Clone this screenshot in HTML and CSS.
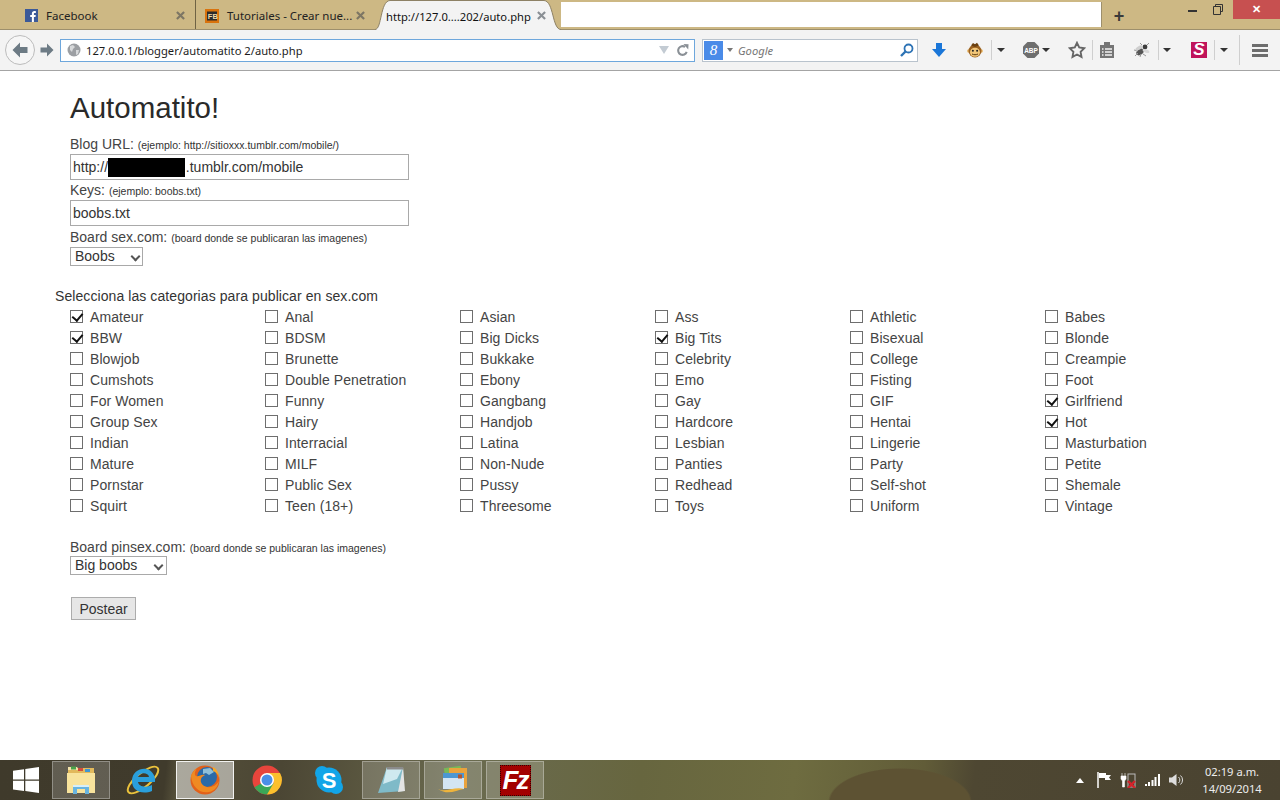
FILE: index.html
```
<!DOCTYPE html>
<html lang="es">
<head>
<meta charset="utf-8">
<title>Automatito</title>
<link rel="stylesheet" href="styles.css">
</head>
<body>
<div class="window">
  <header class="tabstrip">
    <div class="tab tab-fb">
      <svg class="favicon" viewBox="0 0 14 14"><rect width="14" height="14" fill="#3b5998"/><path d="M9.600 14V8.600h1.700l.3-2.100h-2V5.200c0-.6.2-1 1-1h1.100V2.300c-.2 0-.8-.1-1.600-.1-1.600 0-2.700 1-2.700 2.800v1.500H5.600v2.100h1.800V14z" fill="#fff"/></svg>
      <span class="tab-title">Facebook</span>
      <svg class="tab-close" viewBox="0 0 10 10"><path d="M1 1l8 8M9 1l-8 8"/></svg>
    </div>
    <div class="tab tab-tut">
      <svg class="favicon" viewBox="0 0 14 14"><rect width="14" height="14" fill="#d9730d"/><rect x="2" y="2.500" width="10" height="9" fill="#2b2b2b"/><text x="2.800" y="10" font-size="7.500" font-weight="700" font-family="Liberation Sans" fill="#f0d9a8">FB</text></svg>
      <span class="tab-title">Tutoriales - Crear nue...</span>
      <svg class="tab-close" viewBox="0 0 10 10"><path d="M1 1l8 8M9 1l-8 8"/></svg>
    </div>
    <div class="tab tab-active">
      <svg class="tab-shape" viewBox="0 0 186 30" width="186" height="30"><path d="M0 29.500C7 29.500 5 1 15 .5H169C179 1 177 29.500 186 29.500V31H0z" fill="#f3f3f3" stroke="#8d8165"/></svg>
      <span class="tab-title">http://127.0....202/auto.php</span>
      <svg class="tab-close" viewBox="0 0 10 10"><path d="M1 1l8 8M9 1l-8 8"/></svg>
    </div>
    <div class="tab-blank"></div>
    <div class="tab-new">+</div>
    <div class="win-controls">
      <span class="win-min"></span>
      <svg class="win-restore" viewBox="0 0 10 11"><path d="M2.500 2.500V.5h7v7h-2M.5 2.500h7v8h-7z" fill="none" stroke="#333"/></svg>
      <span class="win-close">✕</span>
    </div>
  </header>

  <nav class="toolbar">
    <div class="nav-back"><svg viewBox="0 0 18 18" width="18" height="18"><path d="M9 1.500 1.500 9 9 16.500V12h7.500V6H9z" fill="#6d7b85"/></svg></div>
    <div class="nav-fwd"><svg viewBox="0 0 14 14" width="14" height="14"><path d="M7 .5 13.500 7 7 13.500V9.500H.5v-5H7z" fill="#6d7b85"/></svg></div>
    <div class="urlbar">
      <svg class="globe" viewBox="0 0 14 14" width="14" height="14"><circle cx="7" cy="7" r="6.500" fill="#9c9fa3"/><path d="M3 3l3-1 2 2-2 2-1 3-2-2zM9 7l3 0-1 4-2 1z" fill="#d7d9db"/></svg>
      <span class="url-text">127.0.0.1/blogger/automatito 2/auto.php</span>
      <svg class="url-drop" viewBox="0 0 10 8" width="10" height="8"><path d="M0 0h10L5 8z" fill="#c3cbd3"/></svg>
      <svg class="url-reload" viewBox="0 0 14 14" width="13" height="13"><path d="M11.500 8.500A4.700 4.700 0 1 1 9.800 3.200" fill="none" stroke="#8a9096" stroke-width="2.200"/><path d="M8 0l5.500.3-.3 5.500z" fill="#8a9096"/></svg>
    </div>
    <div class="searchbar">
      <span class="g-badge">8</span>
      <svg class="search-drop" viewBox="0 0 6 4" width="6" height="4"><path d="M0 0h6L3 4z" fill="#777"/></svg>
      <span class="search-text">Google</span>
      <svg class="search-mag" viewBox="0 0 14 14" width="14" height="14"><circle cx="8.500" cy="5.500" r="4" fill="none" stroke="#2d73b5" stroke-width="1.800"/><path d="M5.500 8.500 1 13" stroke="#2d73b5" stroke-width="2.400"/></svg>
    </div>
    <svg class="ic ic-download" viewBox="0 0 16 16" width="16" height="16"><path d="M5 1h6v6h4l-7 8-7-8h4z" fill="#1a76d8"/></svg>
    <svg class="ic ic-monkey" viewBox="0 0 16 16" width="16" height="16"><circle cx="1.800" cy="9" r="1.700" fill="#e9b765"/><circle cx="14.200" cy="9" r="1.700" fill="#e9b765"/><circle cx="8" cy="9" r="6.500" fill="#9a6120"/><path d="M4 3.500 6 1l2 1.300L10 .8l2 2.700-4 1.500z" fill="#6b4010"/><ellipse cx="8" cy="10.300" rx="5" ry="4.500" fill="#f2c678"/><circle cx="5.900" cy="8.800" r="1" fill="#222"/><circle cx="10.100" cy="8.800" r="1" fill="#222"/><path d="M5 12c2 1 4 1 6 0" fill="none" stroke="#5a3a10"/></svg>
    <i class="sep sep-a"></i><i class="caret caret-a"></i>
    <svg class="ic ic-abp" viewBox="0 0 18 18" width="18" height="18"><path d="M5.500 1h7L17 5.500v7L12.500 17h-7L1 12.500v-7z" fill="#6e6e6e"/><text x="9" y="11.800" text-anchor="middle" font-size="6.500" font-weight="700" font-family="Liberation Sans" fill="#fff">ABP</text></svg>
    <i class="caret caret-b"></i>
    <svg class="ic ic-star" viewBox="0 0 18 18" width="18" height="18"><path d="M9 1.800l2.200 4.700 5.100.7-3.700 3.600.9 5.100L9 13.500l-4.500 2.400.9-5.100L1.700 7.200l5.100-.7z" fill="none" stroke="#666" stroke-width="1.900"/></svg>
    <i class="sep sep-b"></i>
    <svg class="ic ic-clip" viewBox="0 0 14 16" width="14" height="16"><path d="M0 3h14v13H0z" fill="#757575"/><rect x="4" y="0" width="6" height="4" fill="#757575"/><path d="M2 7h1.500M5 7h7M2 10h1.500M5 10h7M2 13h1.500M5 13h7" stroke="#f3f3f3" stroke-width="1.300"/></svg>
    <svg class="ic ic-bug" viewBox="0 0 18 16" width="18" height="16"><ellipse cx="7" cy="10" rx="4" ry="2.800" fill="#555" transform="rotate(-35 7 10)"/><circle cx="12" cy="5" r="2.400" fill="#3d3d3d"/><path d="M1 8l4 1M2 14l3-3M7 15l1-3M10 12l3 2M9 3L7 1M14 3l2-2" stroke="#999"/><ellipse cx="6" cy="6" rx="4" ry="1.800" fill="#cfcfcf" transform="rotate(-30 6 6)"/><ellipse cx="13" cy="9" rx="3.500" ry="1.600" fill="#d8d8d8" transform="rotate(20 13 9)"/></svg>
    <i class="sep sep-c"></i><i class="caret caret-c"></i>
    <span class="ic-s">S</span>
    <i class="sep sep-d"></i><i class="caret caret-d"></i>
    <i class="sep sep-e"></i>
    <div class="ic-menu"><i></i><i></i><i></i></div>
  </nav>

  <main class="page">
    <h1 class="title">Automatito!</h1>
    <form class="form">
      <label class="field-label">Blog URL: <small>(ejemplo: http://sitioxxx.tumblr.com/mobile/)</small></label>
      <div class="input-wrap">
        <input class="text-input" type="text" value="http://                    .tumblr.com/mobile">
        <span class="redact"></span>
      </div>
      <label class="field-label field-keys">Keys: <small>(ejemplo: boobs.txt)</small></label>
      <input class="text-input" type="text" value="boobs.txt">
      <label class="field-label field-board">Board sex.com: <small>(board donde se publicaran las imagenes)</small></label>
      <div class="select-wrap select-boobs"><select class="select"><option>Boobs</option></select></div>
      <p class="cat-title">Selecciona las categorias para publicar en sex.com</p>
      <div class="cats">
        <label class="cat"><input type="checkbox" checked><span>Amateur</span></label>
        <label class="cat"><input type="checkbox"><span>Anal</span></label>
        <label class="cat"><input type="checkbox"><span>Asian</span></label>
        <label class="cat"><input type="checkbox"><span>Ass</span></label>
        <label class="cat"><input type="checkbox"><span>Athletic</span></label>
        <label class="cat"><input type="checkbox"><span>Babes</span></label>
        <label class="cat"><input type="checkbox" checked><span>BBW</span></label>
        <label class="cat"><input type="checkbox"><span>BDSM</span></label>
        <label class="cat"><input type="checkbox"><span>Big Dicks</span></label>
        <label class="cat"><input type="checkbox" checked><span>Big Tits</span></label>
        <label class="cat"><input type="checkbox"><span>Bisexual</span></label>
        <label class="cat"><input type="checkbox"><span>Blonde</span></label>
        <label class="cat"><input type="checkbox"><span>Blowjob</span></label>
        <label class="cat"><input type="checkbox"><span>Brunette</span></label>
        <label class="cat"><input type="checkbox"><span>Bukkake</span></label>
        <label class="cat"><input type="checkbox"><span>Celebrity</span></label>
        <label class="cat"><input type="checkbox"><span>College</span></label>
        <label class="cat"><input type="checkbox"><span>Creampie</span></label>
        <label class="cat"><input type="checkbox"><span>Cumshots</span></label>
        <label class="cat"><input type="checkbox"><span>Double Penetration</span></label>
        <label class="cat"><input type="checkbox"><span>Ebony</span></label>
        <label class="cat"><input type="checkbox"><span>Emo</span></label>
        <label class="cat"><input type="checkbox"><span>Fisting</span></label>
        <label class="cat"><input type="checkbox"><span>Foot</span></label>
        <label class="cat"><input type="checkbox"><span>For Women</span></label>
        <label class="cat"><input type="checkbox"><span>Funny</span></label>
        <label class="cat"><input type="checkbox"><span>Gangbang</span></label>
        <label class="cat"><input type="checkbox"><span>Gay</span></label>
        <label class="cat"><input type="checkbox"><span>GIF</span></label>
        <label class="cat"><input type="checkbox" checked><span>Girlfriend</span></label>
        <label class="cat"><input type="checkbox"><span>Group Sex</span></label>
        <label class="cat"><input type="checkbox"><span>Hairy</span></label>
        <label class="cat"><input type="checkbox"><span>Handjob</span></label>
        <label class="cat"><input type="checkbox"><span>Hardcore</span></label>
        <label class="cat"><input type="checkbox"><span>Hentai</span></label>
        <label class="cat"><input type="checkbox" checked><span>Hot</span></label>
        <label class="cat"><input type="checkbox"><span>Indian</span></label>
        <label class="cat"><input type="checkbox"><span>Interracial</span></label>
        <label class="cat"><input type="checkbox"><span>Latina</span></label>
        <label class="cat"><input type="checkbox"><span>Lesbian</span></label>
        <label class="cat"><input type="checkbox"><span>Lingerie</span></label>
        <label class="cat"><input type="checkbox"><span>Masturbation</span></label>
        <label class="cat"><input type="checkbox"><span>Mature</span></label>
        <label class="cat"><input type="checkbox"><span>MILF</span></label>
        <label class="cat"><input type="checkbox"><span>Non-Nude</span></label>
        <label class="cat"><input type="checkbox"><span>Panties</span></label>
        <label class="cat"><input type="checkbox"><span>Party</span></label>
        <label class="cat"><input type="checkbox"><span>Petite</span></label>
        <label class="cat"><input type="checkbox"><span>Pornstar</span></label>
        <label class="cat"><input type="checkbox"><span>Public Sex</span></label>
        <label class="cat"><input type="checkbox"><span>Pussy</span></label>
        <label class="cat"><input type="checkbox"><span>Redhead</span></label>
        <label class="cat"><input type="checkbox"><span>Self-shot</span></label>
        <label class="cat"><input type="checkbox"><span>Shemale</span></label>
        <label class="cat"><input type="checkbox"><span>Squirt</span></label>
        <label class="cat"><input type="checkbox"><span>Teen (18+)</span></label>
        <label class="cat"><input type="checkbox"><span>Threesome</span></label>
        <label class="cat"><input type="checkbox"><span>Toys</span></label>
        <label class="cat"><input type="checkbox"><span>Uniform</span></label>
        <label class="cat"><input type="checkbox"><span>Vintage</span></label>
      </div>
      <label class="field-label field-pinsex">Board pinsex.com: <small>(board donde se publicaran las imagenes)</small></label>
      <div class="select-wrap select-big"><select class="select"><option>Big boobs</option></select></div>
      <button class="submit" type="button">Postear</button>
    </form>
  </main>

  <footer class="taskbar">
    <svg class="start" viewBox="0 0 26 26" width="26" height="26"><path d="M0 3.700 11 2.200V12.500H0zM12.300 2 26 0V12.500H12.300zM0 13.800H11V24L0 22.500zM12.300 13.800H26V26L12.300 24z" fill="#fff"/></svg>
    <div class="task task-open task-explorer">
      <svg viewBox="0 0 32 32" width="32" height="32"><path d="M3 4h26v8H3z" fill="#e2b95c"/><path d="M3 3h9l2 3H3z" fill="#f3e2a8"/><rect x="6" y="2.500" width="5" height="3" fill="#4aa34a"/><rect x="13" y="4" width="5" height="3" fill="#d24c3c"/><rect x="20" y="5" width="5" height="3" fill="#3f96d2"/><path d="M2 9h28v20H2z" fill="#f8e39c"/><path d="M8 30V21h16v9h-4v-5h-8v5z" fill="#68b4e0"/><path d="M8 21h16v2H8z" fill="#d6eef9"/></svg>
    </div>
    <div class="task task-ie">
      <svg viewBox="0 0 34 34" width="34" height="34"><ellipse cx="17" cy="17" rx="19" ry="7" transform="rotate(-40 17 17)" fill="none" stroke="#eac23c" stroke-width="2"/><path d="M29 19H12c.4 4 7 6.500 14 3v6c-10 4-20 0-20-10C6 9 14 5 20 6c6 1 10 7 9 13zM12 14h11c-.5-5-10-5-11 0z" fill="#2a9fdc" fill-rule="evenodd"/></svg>
    </div>
    <div class="task task-open task-active task-firefox">
      <svg viewBox="0 0 32 32" width="32" height="32"><circle cx="16" cy="16" r="14.500" fill="#e2611a"/><circle cx="18" cy="13" r="10" fill="#2a6aa8"/><path d="M14 5l7-1 4 4-5 3-3-2-3 1z" fill="#8fbfd8"/><path d="M2 12c1 11 9 18 18 16 6-1 9-6 10-11-3 5-8 7-12 6-5-1-7-5-6-8 1-3 3-3 4-4-4-1-6 2-9 1C5 11 6 7 8 4 5 6 3 9 2 12z" fill="#ef8a22"/><path d="M24 3c4 2 6 6 6 11-1-4-3-6-6-7z" fill="#f3a72a"/></svg>
    </div>
    <div class="task task-chrome">
      <svg viewBox="0 0 32 32" width="32" height="32"><circle cx="16" cy="16" r="14.500" fill="#e8453c"/><path d="M16 16 3.500 23.300A14.500 14.500 0 0 0 16 30.500l9-10z" fill="#3aa757"/><path d="M16 9h13a14.500 14.500 0 0 1-13 21.500l7-12z" fill="#fbc02d"/><circle cx="16" cy="16" r="7" fill="#fff"/><circle cx="16" cy="16" r="5.500" fill="#4a8fe7"/></svg>
    </div>
    <div class="task task-skype">
      <svg viewBox="0 0 32 32" width="32" height="32"><circle cx="9" cy="9" r="7" fill="#12a5e8"/><circle cx="23" cy="23" r="7" fill="#12a5e8"/><circle cx="16" cy="16" r="12.500" fill="#12a5e8"/><text x="16" y="23.500" text-anchor="middle" font-size="22" font-weight="700" font-family="Liberation Sans" fill="#fff">S</text></svg>
    </div>
    <div class="task task-open task-notepad">
      <svg viewBox="0 0 32 32" width="32" height="32"><path d="M12 3h16l1 24-26 2z" fill="#7fbac8"/><path d="M12 3h16l-6 12L8 20z" fill="#cfe9ef"/><path d="M28 3l2 24-7 1z" fill="#e4e4e4"/><path d="M12 3h16v2.500H12z" fill="#8b8b8b"/></svg>
    </div>
    <div class="task task-open task-mail">
      <svg viewBox="0 0 32 32" width="32" height="32"><rect x="8" y="3" width="17" height="19" fill="#79b957" transform="rotate(-8 16 12)"/><rect x="12" y="4" width="18" height="20" fill="#e9a33d"/><rect x="6" y="9" width="21" height="16" fill="#d3e5f3"/><rect x="6" y="9" width="21" height="5" fill="#4d97d1"/><rect x="21" y="10.500" width="4" height="4" fill="#b5562e"/><path d="M1 25c7 4 17-3 26 0-8 1-16 7-26 0z" fill="#eeb43c"/></svg>
    </div>
    <div class="task task-open task-filezilla">
      <span class="fz">Fz</span>
    </div>
    <div class="tray">
      <svg class="tray-up" viewBox="0 0 8 5" width="8" height="5"><path d="M4 0l4 5H0z" fill="#fff"/></svg>
      <svg class="tray-flag" viewBox="0 0 16 16" width="16" height="16"><path d="M1 0v16" stroke="#fff" stroke-width="1.500"/><path d="M2 1h7v2h5l-2 2.500 2 2.500H8V6H2z" fill="#fff"/></svg>
      <svg class="tray-power" viewBox="0 0 16 16" width="16" height="16"><path d="M2 1v3M5 1v3M1 4h5v3l-1.500 2v6h-2V9L1 7z" fill="#fff" stroke="#fff" stroke-width=".6"/><rect x="8" y="2" width="7" height="13" fill="none" stroke="#bbb"/><path d="M8 9l7 7M15 9l-7 7" stroke="#d4232b" stroke-width="2.400"/></svg>
      <svg class="tray-signal" viewBox="0 0 15 12" width="15" height="12"><path d="M0 10h2v2H0zM3 8h2v4H3zM6.500 6h2v6h-2zM9.500 3h2v9h-2zM13 0h2v12h-2z" fill="#fff"/></svg>
      <svg class="tray-vol" viewBox="0 0 15 14" width="15" height="14"><path d="M0 4.500h3L7.500 1v12L3 9.500H0z" fill="#ddd"/><path d="M9.500 4a4 4 0 0 1 0 6M11.500 2.500a6 6 0 0 1 0 9" fill="none" stroke="#ddd"/></svg>
      <div class="clock"><span>02:19 a.m.</span><span>14/09/2014</span></div>
    </div>
  </footer>
</div>
</body>
</html>
```

FILE: styles.css
```
* { box-sizing: border-box; }
html, body { margin: 0; padding: 0; height: 100%; overflow: hidden; background: #fff; }
.window { width: 1280px; height: 800px; display: flex; flex-direction: column; font-family: "Liberation Sans", Arial, sans-serif; color: #333; }

/* tab strip */
.tabstrip { height: 30px; flex: none; display: flex; background: #cdb884; border-bottom: 1px solid #9d8f6c; font: 11.500px "Noto Sans", "Open Sans", sans-serif; color: #222; }
.tab { display: flex; align-items: center; height: 29px; position: relative; }
.tab-fb { width: 196px; padding: 2px 0 0 25px; border-right: 1px solid #6f6344; }
.tab-fb .favicon { width: 13px; height: 13px; }
.tab-tut { width: 176px; padding: 2px 0 0 9px; }
.favicon { width: 14px; height: 14px; margin-right: 8px; flex: none; }
.tab-close { position: absolute; right: 10px; top: 11px; width: 9px; height: 9px; fill: none; stroke: #7d7664; stroke-width: 2.400; }
.tab-tut .tab-close { right: 7px; }
.tab-active { width: 186px; height: 30px; padding: 2px 0 0 11px; margin-left: 3px; color: #111; font-size: 11.200px; }
.tab-active .tab-close { right: 15px; stroke: #8a8f94; }
.tab-title { position: relative; }
.tab-shape { position: absolute; left: 0; top: 0; }
.tab-blank { width: 540px; height: 25px; margin-top: 2px; background: #fff; flex: none; box-shadow: 1px 0 0 #9d8f6c; }
.tab-new { width: 36px; text-align: center; font: 700 18px/32px "Liberation Sans", sans-serif; color: #3a3a3a; }
.win-controls { flex: 1; position: relative; display: flex; padding-left: 51px; }
.win-min { width: 9px; height: 2px; margin: 10px 16px 0 0; background: #333; }
.win-restore { width: 10px; height: 11px; margin-top: 4px; }
.win-close { position: absolute; right: 0; top: 0; width: 47px; height: 19px; background: #c75050; color: #fff; text-align: center; font: 700 11px/19px "Liberation Sans", sans-serif; }

/* toolbar */
.toolbar { height: 41px; flex: none; display: flex; align-items: center; background: #f3f3f3; border-bottom: 1px solid #a4a4a4; position: relative; }
.nav-back { width: 30px; height: 30px; margin-left: 5px; border: 1px solid #bcbcbc; border-radius: 50%; background: #f6f6f6; display: flex; align-items: center; justify-content: center; flex: none; }
.nav-fwd { width: 14px; height: 14px; margin-left: 5px; flex: none; display: flex; }
.urlbar { width: 635px; height: 23px; margin-left: 6px; flex: none; display: flex; align-items: center; background: #fff; border: 1px solid #6ea7dc; padding-left: 6px; }
.globe { flex: none; }
.url-text { font: 11.200px "Noto Sans", sans-serif; margin-left: 5px; color: #1c1c1c; flex: 1; }
.url-drop { margin-right: 7px; flex: none; }
.url-reload { margin-right: 5px; flex: none; }
.searchbar { width: 216px; height: 23px; margin-left: 7px; flex: none; display: flex; align-items: center; background: #fff; border: 1px solid #b9c3cd; }
.g-badge { width: 19px; height: 19px; margin-left: 1px; background: #4a8be8; color: #fff; text-align: center; font: italic 15px/18px "Liberation Serif", serif; flex: none; }
.search-drop { margin-left: 4px; flex: none; }
.search-text { font: italic 11.200px "Noto Sans", sans-serif; color: #777; margin-left: 5px; flex: 1; }
.search-mag { margin-right: 3px; flex: none; }
.ic { flex: none; }
.ic-download { margin-left: 13px; }
.ic-monkey { margin-left: 20px; }
.sep { width: 1px; height: 20px; background: #cfcfcf; flex: none; }
.caret { width: 0; height: 0; border: 4px solid transparent; border-top: 4px solid #333; border-bottom: 0; flex: none; }
.sep-a { margin-left: 8px; }
.caret-a { margin-left: 5px; }
.ic-abp { margin-left: 17px; }
.caret-b { margin-left: 2px; }
.ic-star { margin-left: 18px; }
.sep-b { margin-left: 6px; }
.ic-clip { margin-left: 7px; }
.ic-bug { margin-left: 19px; }
.sep-c { margin-left: 7px; }
.caret-c { margin-left: 4px; }
.ic-s { width: 16px; height: 16px; margin-left: 20px; background: #c0135a; color: #fff; text-align: center; font: italic 700 17px/16px "Liberation Sans", sans-serif; flex: none; }
.sep-d { margin-left: 7px; }
.caret-d { margin-left: 5px; }
.sep-e { height: 30px; margin-left: 11px; }
.ic-menu { width: 16px; margin-left: 12px; flex: none; display: flex; flex-direction: column; gap: 2px; }
.ic-menu i { height: 3px; background: #6d6d6d; display: block; }

/* page */
.page { flex: 1; padding: 0 0 0 70px; background: #fff; overflow: hidden; }
.title { font-size: 29.500px; font-weight: 400; line-height: 34px; margin: 20px 0 11px; color: #2a2a2a; }
.form { display: block; }
.field-label { display: block; font-size: 14px; line-height: 16px; margin-bottom: 1px; color: #444; }
.field-label small { font-size: 10.500px; color: #333; }
.input-wrap { position: relative; width: 339px; }
.text-input { display: block; width: 339px; height: 26px; margin: 0; padding: 1px 2px; border: 1px solid #a9a9a9; font: 14px "Liberation Sans", sans-serif; color: #333; background: #fff; }
.redact { position: absolute; left: 38px; top: 4px; width: 77px; height: 19px; background: #000; }
.field-keys { margin-top: 2px; }
.field-board { margin-top: 3px; }
.select-wrap { position: relative; height: 19px; }
.select-wrap::after { content: ""; position: absolute; top: 6px; width: 5px; height: 5px; border-right: 2px solid #555; border-bottom: 2px solid #555; transform: rotate(45deg); pointer-events: none; }
.select-boobs::after { left: 62px; }
.select-big::after { left: 85px; }
.select { appearance: none; -webkit-appearance: none; height: 19px; padding: 0 0 0 4px; border: 1px solid #a9a9a9; border-radius: 0; background: #fff; font: 14px/17px "Liberation Sans", sans-serif; color: #333; display: block; }
.select-boobs .select { width: 73px; }
.select-big .select { width: 97px; }
.cat-title { margin: 22px 0 2px -15px; font-size: 14px; line-height: 16px; color: #333; letter-spacing: .08px; }
.cats { display: grid; grid-template-columns: repeat(6, 195px); grid-auto-rows: 21px; }
.cat { display: flex; align-items: center; font-size: 14px; color: #444; letter-spacing: .08px; }
.cat input { appearance: none; -webkit-appearance: none; width: 13px; height: 13px; margin: 0 7px 0 0; border: 1px solid #6e6e6e; background: #fff; position: relative; flex: none; }
.cat input:checked::after { content: ""; position: absolute; left: 3px; top: 0; width: 5px; height: 8px; border-right: 2px solid #111; border-bottom: 2px solid #111; transform: rotate(40deg); }
.field-pinsex { margin-top: 23px; margin-bottom: 0; }
.submit { display: block; width: 65px; height: 23px; margin: 22px 0 0 1px; padding: 0; border: 1px solid #acacac; background: #e6e6e6; font: 14px "Liberation Sans", sans-serif; color: #333; }

/* taskbar */
.taskbar { height: 40px; flex: none; display: flex; align-items: center; color: #fff;
  background:
    radial-gradient(ellipse 72px 34px at 900px 42px, #5d5233 97%, transparent 100%),
    linear-gradient(97deg, #3f3a2b 0, #403b2c 13%, #55503a 14%, #4b4634 22%, #5d5a42 30%, #6a6b50 36%, #67663f 50%, #6e6c40 62%, #615c38 72%, #4e4732 76%, #4a4331 100%); }
.start { margin-left: 13px; flex: none; }
.task { width: 58px; height: 38px; display: flex; align-items: center; justify-content: center; flex: none; }
.task-open { background: rgba(255,255,255,.18); border: 1px solid rgba(255,255,255,.3); }
.task-active { background: rgba(255,255,255,.5); border-color: rgba(255,255,255,.85); }
.task-explorer { margin-left: 13px; }
.task-ie { margin-left: 4px; }
.task-firefox { margin-left: 4px; }
.task-chrome { margin-left: 4px; }
.task-skype { margin-left: 4px; }
.task-notepad { margin-left: 4px; }
.task-mail { margin-left: 4px; }
.task-filezilla { margin-left: 4px; }
.fz { width: 31px; height: 31px; background: #a30000; border: 1px dotted #300; color: #fff; text-align: center; font: italic 700 26px/29px "Liberation Sans", sans-serif; letter-spacing: -2px; }
.tray { margin-left: auto; display: flex; align-items: center; }
.tray-up { margin-right: 13px; }
.tray-flag { margin-right: 7px; }
.tray-power { margin-right: 9px; }
.tray-signal { margin-right: 9px; }
.tray-vol { margin-right: 12px; }
.clock { width: 72px; margin-right: 12px; display: flex; flex-direction: column; align-items: center; font: 11.200px/17px "Noto Sans", sans-serif; color: #eee; }
```
